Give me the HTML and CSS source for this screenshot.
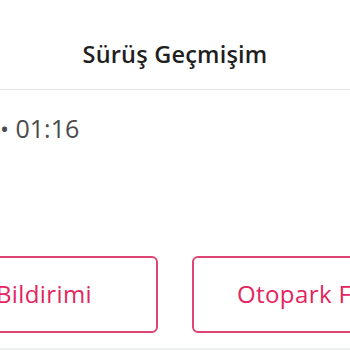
FILE: index.html
```html
<!DOCTYPE html>
<html lang="tr">
<head>
<meta charset="utf-8">
<link rel="stylesheet" href="styles.css">
</head>
<body>
<div class="page">
  <header class="topbar">
    <h1 class="title">Sürüş Geçmişim</h1>
  </header>
  <section class="ride">
    <span class="ride-time"><span class="dot">•</span> 01:16</span>
  </section>
  <div class="actions">
    <button class="btn btn-left">Hasar Bildirimi</button>
    <button class="btn btn-right">Otopark Fişlerim</button>
  </div>
  <div class="tabbar"></div>
</div>
</body>
</html>
```

FILE: styles.css
```css
html, body {
  margin: 0;
  padding: 0;
  background: #ffffff;
}
.page {
  width: 350px;
  height: 350px;
  overflow: hidden;
  font-family: "Open Sans", "Noto Sans", sans-serif;
  display: flex;
  flex-direction: column;
}
.topbar {
  height: 90px;
  border-bottom: 1px solid #e7e7e7;
  display: flex;
  align-items: flex-end;
  justify-content: center;
  box-sizing: border-box;
}
.title {
  margin: 0 0 20px;
  font-size: 23.5px;
  font-weight: 600;
  color: #1f1f1f;
  line-height: 30px;
  letter-spacing: 0.2px;
}
.ride {
  height: 166px;
  padding: 24px 0 0 0;
  box-sizing: border-box;
}
.ride-time {
  font-size: 25px;
  color: #4b4b4d;
  line-height: 28px;
}
.dot {
  font-size: 24px;
}
.actions {
  display: flex;
  gap: 34px;
  margin-left: -140px;
  height: 77px;
}
.btn {
  flex: 0 0 298px;
  height: 77px;
  box-sizing: border-box;
  border: 2px solid #dc4474;
  border-radius: 6px;
  background: #ffffff;
  font-family: "Open Sans", "Noto Sans", sans-serif;
  font-size: 24px;
  font-weight: 500;
  letter-spacing: 0.4px;
  color: #e3255f;
  display: flex;
  align-items: center;
  padding: 0 0 2px;
}
.btn-left {
  justify-content: flex-end;
  padding-right: 64px;
}
.btn-right {
  justify-content: flex-start;
  padding-left: 43px;
}
.tabbar {
  margin-top: 15px;
  flex: 1;
  background: #eef0f0;
}
```
